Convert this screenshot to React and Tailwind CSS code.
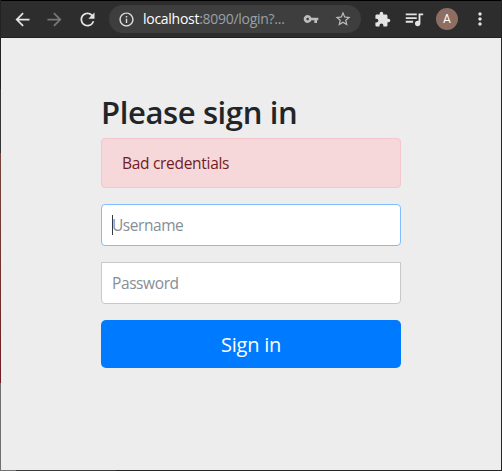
import {
  MdArrowBack,
  MdArrowForward,
  MdRefresh,
  MdInfoOutline,
  MdVpnKey,
  MdStarBorder,
  MdExtension,
  MdQueueMusic,
  MdMoreVert,
} from 'react-icons/md';

function Toolbar() {
  return (
    <header className="flex h-[37px] shrink-0 items-center border-b border-[#202020] bg-[#2d2d2d] text-[#e4e4e4]">
      <MdArrowBack className="ml-[11px] size-[21px] shrink-0" />
      <MdArrowForward className="ml-[11px] size-[21px] shrink-0 text-[#777777]" />
      <MdRefresh className="ml-3 size-[21px] shrink-0" />
      <div className="ml-[11px] flex h-7 w-[252px] shrink-0 items-center rounded-full bg-[#3e3e3e] text-[#bdbdbd]">
        <MdInfoOutline className="ml-[9px] size-[17px] shrink-0 text-[#dedede]" />
        <div className="ml-2 w-[150px] shrink-0 whitespace-nowrap text-[14px] leading-5 tracking-[-0.28px] text-[#9aa0a6]">
          <span className="text-white">localhost</span>:8090/login?...
        </div>
        <MdVpnKey className="ml-[10px] size-4 shrink-0" />
        <MdStarBorder className="ml-[15px] size-[18px] shrink-0" />
      </div>
      <MdExtension className="ml-[13px] size-[17px] shrink-0" />
      <MdQueueMusic className="ml-3 size-[22px] shrink-0" />
      <div className="ml-[11px] flex size-[22px] shrink-0 items-center justify-center rounded-full bg-[#8d6e63] font-[Roboto] text-[12px] text-white">
        A
      </div>
      <MdMoreVert className="ml-3 size-5 shrink-0" />
    </header>
  );
}

export default function App() {
  return (
    <div className="flex h-[471px] w-[502px] overflow-hidden bg-[#252525] font-['Open_Sans','Noto_Sans',sans-serif]">
      <div className="flex w-px shrink-0 flex-col">
        <div className="h-[89px] bg-[#222222]" />
        <div className="h-16 bg-[#343434]" />
        <div className="h-[230px] bg-linear-to-b from-[#75453a] to-[#701c25]" />
        <div className="flex-1 bg-[#707070]" />
      </div>
      <div className="flex w-[500px] shrink-0 flex-col border-t border-black">
        <Toolbar />
        <main className="flex-1 bg-[#ededed] px-[100px] pt-[54px]">
          <h2 className="mb-2 h-[38px] whitespace-nowrap pt-px text-[31px] leading-[38px] font-semibold tracking-[-0.38px] text-[#212529]">
            Please sign in
          </h2>
          <div className="mb-4 h-[50px] rounded border border-[#f5c6cb] bg-[#f6d7da] px-5 py-3 text-[15.5px] leading-6 tracking-[-0.3px] text-[#721c24]">
            Bad credentials
          </div>
          <div className="mb-4 flex h-[42px] items-center rounded border border-[#80bdff] bg-white px-[10px] text-[15.5px] text-[#868e96]">
            <span className="-mr-px h-5 w-px bg-[#343a40]" />
            <span className="pt-px tracking-[-0.45px]">Username</span>
          </div>
          <div className="mb-4 flex h-[42px] items-center rounded-b border border-[#c8c8c8] bg-white px-[10px] text-[15.5px] text-[#868e96]">
            <span className="pt-px tracking-[-0.4px]">Password</span>
          </div>
          <button className="h-12 w-full rounded-[5px] bg-[#007bff] pt-0.5 text-[20px] leading-[30px] tracking-[-0.25px] text-white">
            Sign in
          </button>
        </main>
        <div className="flex h-px shrink-0">
          <div className="w-[15px] bg-[#707070]" />
          <div className="w-[100px] bg-[#3a3a3a]" />
        </div>
      </div>
    </div>
  );
}
